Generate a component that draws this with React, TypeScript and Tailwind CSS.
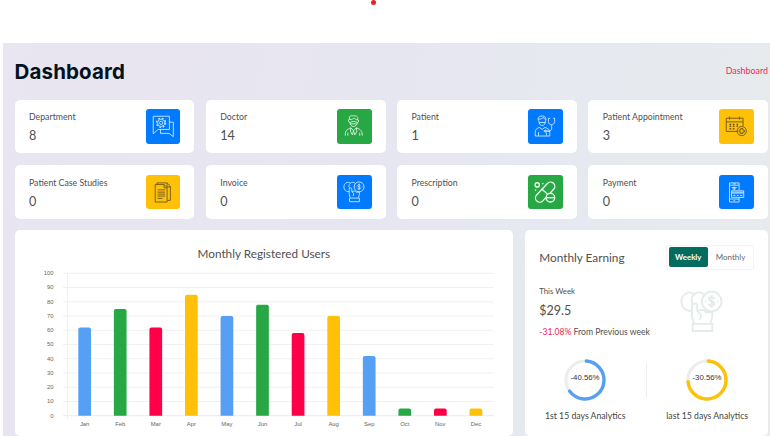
import type { ReactNode } from "react";

const HandCoins = () => (
  <>
    <circle cx="67" cy="36" r="15" />
    <path d="M56 26C50 20 42 21 38 28C35 33 36 36 38 39M40 25C33 18 21 25 21 36C21 46 29 52 37 50" />
    <path d="M40 69L37 59V43C37 38 45 38 45 43V50L51 57M45 51C50 47 56 49 58 52H68V60L65 69M51 57L49 64" />
    <path d="M38 70H68V81H38Z" />
    <path d="M71 32C69 28 62 29 63 33C64 37 71 35 71 40C70 44 64 43 62 40M67 26V46M57 36H59M75 36H77" />
  </>
);

const icons: Record<string, ReactNode> = {
  department: (
    <>
      <path d="M22 75V22H71V62H37ZM71 40H83V84L70 74H44V62" />
      <circle cx="46" cy="42" r="11" />
      <circle cx="46" cy="42" r="5" />
      <circle cx="46" cy="42" r="14" strokeWidth="3.5" strokeDasharray="5.5 5.5" />
    </>
  ),
  doctor: (
    <>
      <path d="M38 32C34 18 46 20 50 21C61 19 65 26 62 34M38 31C33 31 34 41 39 41C40 49 45 53 50 53C55 53 61 49 62 41C67 41 67 32 62 32" />
      <path d="M38 32C46 33 50 28 53 28C56 33 60 32 62 33M39 41C46 37 54 37 62 41M40 45H60" />
      <path d="M25 81C25 65 29 63 42 57L50 66L59 57C73 63 76 66 77 81M42 57L41 68L46 78M59 57L60 68L55 78M50 66L47 79M50 66L54 79M33 72V81M69 72V81" />
    </>
  ),
  patient: (
    <>
      <path d="M31 35C29 25 35 21 43 21C51 21 56 27 54 35M31 31C39 32 43 27 47 26C49 30 51 31 54 32M33 35C32 45 38 50 43 50C48 50 54 45 53 35M34 41H52" />
      <path d="M22 82V70C22 62 26 59 35 56L43 62L51 56C62 59 65 62 66 71V82H22M32 70V81M56 71V81M47 67H66" />
      <path d="M67 28H62V38C62 51 80 51 81 38V28H76M72 48V58C72 66 66 69 59 67" />
      <circle cx="53" cy="67" r="3" />
    </>
  ),
  appointment: (
    <>
      <path d="M56 68H22V28H73V52M22 39H73M32 23V32M62 23V32" />
      <path d="M32 47H37M42 47H47M53 47H58M32 53H37M42 53H47M53 53H58M32 60H37M42 60H47" strokeWidth="4" />
      <circle cx="69" cy="67" r="14" />
      <path d="M66 59H72V64H77V70H72V75H66V70H61V64H66Z" />
    </>
  ),
  studies: (
    <>
      <path d="M28 29H55L64 38V82H28ZM55 29V39H64M33 28V24H64L74 34V77H65M64 24V36H73" />
      <path d="M35 45H58M35 52H58M35 58H58M35 64H58M35 71H50" />
    </>
  ),
  invoice: <HandCoins />,
  prescription: (
    <>
      <rect x="15" y="39" width="74" height="26" rx="13" strokeWidth="4" transform="rotate(-47 52 52)" />
      <path d="M41 42L62 61" strokeWidth="4" />
      <circle cx="68" cy="69" r="13" strokeWidth="4" fill="#28a745" />
      <path d="M55 69H81" strokeWidth="4" />
      <circle cx="28" cy="30" r="6.5" strokeWidth="4" />
      <path d="M43 26H47M21 46H25" strokeWidth="4" />
    </>
  ),
  payment: (
    <>
      <path d="M61 46V24H32V82H61V69M32 31H61M32 73H61M42 27H51M44 78H49M38 38H54M41 42H51M46 35V46" />
      <path d="M38 48H75V68H38ZM38 52H75M38 55H75M42 62H50M54 62H60M64 62H71" />
    </>
  ),
};

const stats = [
  { label: "Department", value: "8", icon: "department", tile: "bg-[#007bff] text-[#d9ebff]" },
  { label: "Doctor", value: "14", icon: "doctor", tile: "bg-[#28a745] text-[#e3f6e7]" },
  { label: "Patient", value: "1", icon: "patient", tile: "bg-[#007bff] text-[#d9ebff]" },
  { label: "Patient Appointment", value: "3", icon: "appointment", tile: "bg-[#ffc107] text-[#665323]" },
  { label: "Patient Case Studies", value: "0", icon: "studies", tile: "bg-[#ffc107] text-[#665323]" },
  { label: "Invoice", value: "0", icon: "invoice", tile: "bg-[#007bff] text-[#d9ebff]" },
  { label: "Prescription", value: "0", icon: "prescription", tile: "bg-[#28a745] text-[#effff2]" },
  { label: "Payment", value: "0", icon: "payment", tile: "bg-[#007bff] text-[#d9ebff]" },
];

const bars = [
  ["Jan", 62], ["Feb", 75], ["Mar", 62], ["Apr", 85], ["May", 70], ["Jun", 78],
  ["Jul", 58], ["Aug", 70], ["Sep", 42], ["Oct", 5], ["Nov", 5], ["Dec", 5],
] as const;
const barColors = ["#559ff5", "#28a745", "#ff0048", "#ffc107"];

function BarChart() {
  const base = 150.7;
  const unit = 1.424;
  return (
    <svg className="block" width="498" height="170" viewBox="0 0 498 170" fontFamily="'Liberation Sans', Arial, sans-serif" fontSize="5.9" fill="#666">
      {Array.from({ length: 11 }, (_, i) => {
        const y = base - i * 10 * unit;
        return (
          <g key={i}>
            <path d={`M48 ${y}H479`} stroke={i === 0 ? "#eaeaea" : "#f1f1f1"} strokeWidth="1" />
            <text x="38.6" y={y + 1.8} textAnchor="end">{i * 10}</text>
          </g>
        );
      })}
      <path d="M52.5 8V155" stroke="#f1f1f1" />
      {bars.map(([month, value], i) => {
        const x = 63.3 + i * 35.57;
        const top = base - value * unit;
        return (
          <g key={month}>
            <path
              d={`M${x} ${base}V${top + 2}Q${x} ${top} ${x + 2} ${top}H${x + 10.7}Q${x + 12.7} ${top} ${x + 12.7} ${top + 2}V${base}Z`}
              fill={barColors[i % 4]}
            />
            <text x={x + 6.35} y="161" textAnchor="middle">{month}</text>
          </g>
        );
      })}
    </svg>
  );
}

function Ring({ label, color, share, caption }: { label: string; color: string; share: number; caption: string }) {
  const length = 2 * Math.PI * 19;
  return (
    <div className="flex w-[121px] shrink-0 flex-col items-center">
      <svg width="42" height="42" viewBox="0 0 42 42" className="overflow-visible">
        <circle cx="21" cy="21" r="19" fill="none" stroke="#ededed" strokeWidth="3.2" />
        <circle
          cx="21" cy="21" r="19" fill="none" stroke={color} strokeWidth="3.4" strokeLinecap="round"
          strokeDasharray={`${length * share} ${length}`} transform="rotate(-86 21 21)"
        />
        <text x="21" y="20.9" textAnchor="middle" fontFamily="'Liberation Sans', Arial, sans-serif" fontSize="7.8" fill="#333">{label}</text>
      </svg>
      <p className="mt-[8.5px] whitespace-nowrap text-[8.7px] leading-[12px] text-[#444]">{caption}</p>
    </div>
  );
}

export default function App() {
  return (
    <div className="flex h-[436px] w-[770px] flex-col overflow-hidden bg-white font-['Lato',sans-serif] text-[#505050]">
      <div className="flex h-[43px] shrink-0 pl-[370.5px]">
        <span className="size-[5px] rounded-full bg-[#e8221f]" />
      </div>
      <main className="ml-[3px] h-[393px] bg-[linear-gradient(100deg,#eae5f0_0%,#e6e6f1_45%,#e6eaef_75%,#e7ebed_100%)] pl-[11.5px] pr-[2px]">
        <header className="flex h-[56.5px] items-center justify-between">
          <h1 className="pt-[2px] font-['Inter',sans-serif] text-[20.5px] font-bold leading-none tracking-[0.15px] text-[#04121d]">Dashboard</h1>
          <a className="text-[8.9px] leading-none text-[#f0265c]">Dashboard</a>
        </header>
        <section className="grid grid-cols-4 gap-x-[11.5px] gap-y-[11.7px]">
          {stats.map((s) => (
            <article key={s.label} className="flex h-[53.8px] items-center justify-between rounded-[5px] bg-white pl-[14.5px] pr-[14px]">
              <div className="pt-[2px]">
                <p className="whitespace-nowrap text-[8.75px] leading-[12px]">{s.label}</p>
                <p className="mt-[5px] text-[12.6px] leading-[15px]">{s.value}</p>
              </div>
              <div className={`size-[34.6px] rounded-[3px] ${s.tile}`}>
                <svg viewBox="0 0 105 105" className="size-full" fill="none" stroke="currentColor" strokeWidth="2.6">{icons[s.icon]}</svg>
              </div>
            </article>
          ))}
        </section>
        <section className="mt-[11.7px] flex gap-[11.5px]">
          <article className="h-[205.5px] w-[498.7px] shrink-0 rounded-[5px] bg-white pt-[15px]">
            <h2 className="pt-px text-center text-[11.75px] leading-[16px]">Monthly Registered Users</h2>
            <div className="mt-[3px]"><BarChart /></div>
          </article>
          <article className="h-[205.5px] min-w-0 flex-1 rounded-[5px] bg-white pl-[14.5px] pt-[14.5px]">
            <div className="flex h-[25px] items-center justify-between pr-[14px]">
              <h2 className="pt-[2px] text-[11.8px] leading-[16px]">Monthly Earning</h2>
              <div className="flex h-[25px] w-[88px] items-center rounded-[2px] border border-[#f3f3f3] pl-[1.5px] text-[8px]">
                <button className="h-[20px] w-[39.5px] rounded-[2px] bg-[#046c5f] text-[7.8px] font-bold text-white">Weekly</button>
                <button className="flex-1 text-[#666]">Monthly</button>
              </div>
            </div>
            <div className="flex h-[70px] justify-between pt-[15px]">
              <div>
                <p className="text-[7.8px] leading-[12px]">This Week</p>
                <p className="mt-[6px] text-[12.5px] leading-[16px]">$29.5</p>
                <p className="mt-[7.5px] whitespace-nowrap text-[8.65px] leading-[12px]"><span className="text-[#f0265c]">-31.08%</span> From Previous week</p>
              </div>
              <svg className="mr-[45px] mt-[6.5px] h-[42px] w-[43px] shrink-0" viewBox="19 20 65 64" fill="none" stroke="#e2ecea" strokeWidth="2.8"><HandCoins /></svg>
            </div>
            <div className="-ml-[14.5px] mt-[19.5px] flex items-start">
              <Ring label="-40.56%" color="#559ff5" share={0.635} caption="1st 15 days Analytics" />
              <span className="mt-[4px] h-[35px] w-px shrink-0 bg-[#eee]" />
              <Ring label="-30.56%" color="#ffc107" share={0.72} caption="last 15 days Analytics" />
            </div>
          </article>
        </section>
      </main>
    </div>
  );
}
